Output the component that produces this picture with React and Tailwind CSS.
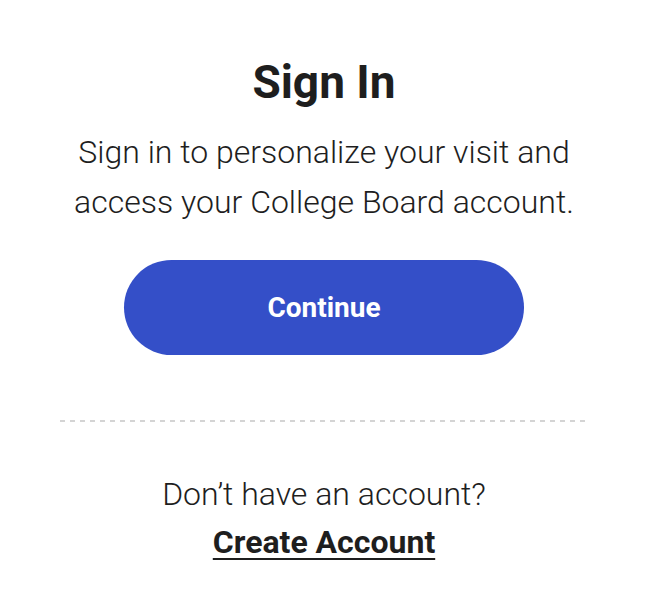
export default function App() {
  return (
    <div className="min-h-screen bg-white font-['Roboto',sans-serif] text-[#1e1e1e]">
      <div className="flex w-[648px] justify-center">
        <div className="flex w-[528px] flex-col items-center pt-[54px] text-center">
          <h1 className="text-[46px] font-bold leading-[56px]">Sign In</h1>
          <p className="mt-[17px] text-[32px] font-light leading-[50px]">
            Sign in to personalize your visit and access your College Board account.
          </p>
          <button
            type="button"
            className="mt-[33px] h-[95px] w-[400px] rounded-full bg-[#344fc8] text-[28px] font-bold text-white"
          >
            Continue
          </button>
          <div className="mt-[65px] h-[2px] w-full bg-[linear-gradient(to_right,#d4d4d4_5px,transparent_5px)] bg-[length:10px_2px]" />
          <p className="mt-[48px] text-[32px] font-light leading-[48px]">Don’t have an account?</p>
          <a href="#" className="text-[32px] font-bold leading-[48px] underline decoration-2 underline-offset-[5px]">
            Create Account
          </a>
        </div>
      </div>
    </div>
  )
}
